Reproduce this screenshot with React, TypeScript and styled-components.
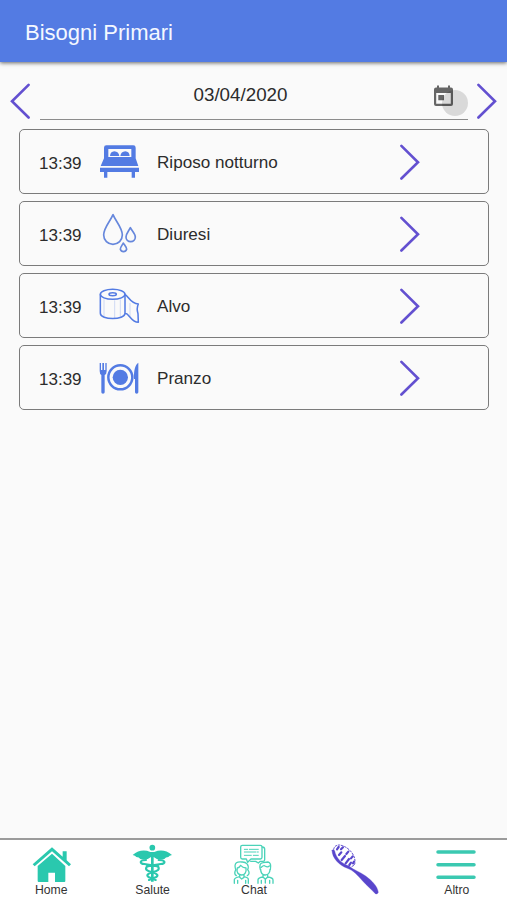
import React from "react";
import styled, { createGlobalStyle } from "styled-components";

const BLUE = "#537be3";
const VIOLET = "#6350d0";
const TEAL = "#2ac8ae";

const GlobalStyle = createGlobalStyle`
  * { box-sizing: border-box; }
  body { margin: 0; background: #fafafa; font-family: "Liberation Sans", Arial, sans-serif; }
`;

const Screen = styled.div`
  display: flex;
  flex-direction: column;
  height: 100vh;
  background: #fafafa;
  color: #2c2c2c;
`;

const Header = styled.header`
  flex: none;
  height: 62px;
  padding: 4px 25px 0;
  display: flex;
  align-items: center;
  background: ${BLUE};
  box-shadow: 0 1px 4px rgba(0, 0, 0, 0.6);
`;

const Title = styled.h1`
  margin: 0;
  color: #f4f8ff;
  font-size: 22px;
  font-weight: 400;
`;

const DateBar = styled.div`
  flex: none;
  display: flex;
  height: 57px;
  margin-top: 1px;
  padding: 0 8px;
`;

const ArrowButton = styled.button`
  flex: none;
  width: 24px;
  height: 36px;
  margin-top: 20px;
  padding: 0;
  border: 0;
  background: none;
`;

const DateField = styled.div`
  flex: 1;
  display: grid;
  grid-template-columns: 1fr auto 1fr;
  align-items: center;
  margin: 0 7px 0 8px;
  padding-top: 8px;
  border-bottom: 1px solid #8c8c8c;
`;

const DateText = styled.span`
  grid-column: 2;
  margin-left: -27px;
  font-size: 18.8px;
`;

const CalendarButton = styled.span`
  justify-self: end;
  position: relative;
  width: 22px;
  height: 24px;
  margin: 4px 13px 0 0;
`;

const Ripple = styled.span`
  position: absolute;
  left: 9px;
  top: 5px;
  width: 26px;
  height: 26px;
  border-radius: 50%;
  background: rgba(0, 0, 0, 0.13);
`;

const List = styled.main`
  flex: 1;
  display: flex;
  flex-direction: column;
  gap: 7px;
  padding: 9px 18px 0 19px;
`;

const Row = styled.div`
  display: grid;
  grid-template-columns: 59px 59px 1fr 24px 66px;
  align-items: center;
  height: 65px;
  padding-left: 19px;
  border: 1.5px solid #7b7b7b;
  border-radius: 5px;
`;

const Time = styled.span`
  padding-top: 4px;
  font-size: 17px;
`;

const Label = styled.span`
  padding-top: 2px;
  font-size: 17.1px;
`;

const Icon = styled.svg<{ $tone: string }>`
  display: block;
  width: 42px;
  height: 42px;
  overflow: visible;
  color: ${(p) => p.$tone};
`;

const ChevronSvg = styled.svg<{ $left?: boolean }>`
  display: block;
  width: 24px;
  height: 36px;
  transform: ${(p) => (p.$left ? "scaleX(-1)" : "none")};
`;

const CalendarSvg = styled.svg`
  display: block;
  width: 22px;
  height: 24px;
`;

const Nav = styled.nav`
  flex: none;
  display: grid;
  grid-template-columns: repeat(5, 1fr);
  height: 62px;
  border-top: 2px solid #9b9b9b;
  background: #fff;
`;

const NavItem = styled.div`
  display: flex;
  flex-direction: column;
  align-items: center;
  padding-top: 4px;
`;

const NavLabel = styled.span`
  margin-top: -3px;
  padding-left: 1px;
  font-size: 12.2px;
  line-height: 14px;
  color: #333;
`;

function Chevron({ left }: { left?: boolean }) {
  return (
    <ChevronSvg $left={left} viewBox="0 0 24 36" fill="none">
      <path d="M3.4 1.8 20 18.3 3.4 34.5" stroke={VIOLET} strokeWidth="2.6" strokeLinecap="round" />
    </ChevronSvg>
  );
}

const Bed = () => (
  <Icon $tone={BLUE} viewBox="24 33 126 126" fill="currentColor">
    <path
      fillRule="evenodd"
      d="M49 46H130Q137 46 137 53V85L145 108H32L42 85V53Q42 46 49 46ZM55 57V81H124V57Z"
    />
    <path d="M60 78Q61 65 73 64Q86 65 88 78ZM91 78Q93 65 106 64Q118 65 119 78Z" />
    <path d="M30 113H147V126H135V143H125V126H52V143H42V126H30Z" />
  </Icon>
);

const Drops = () => (
  <Icon $tone="#6687dc" viewBox="24 24 126 126" fill="none" stroke="currentColor" strokeWidth="5" strokeLinejoin="round">
    <path d="M69 29C62 47 41 68 41 90A28 28 0 0 0 97 90C97 68 76 47 69 29Z" />
    <path d="M121 68C117 77 108 86 108 96A14 14 0 0 0 136 96C136 86 125 77 121 68Z" />
    <path d="M100 114C97 120 91 126 91 133A10 10 0 0 0 110 133C110 126 103 120 100 114Z" />
  </Icon>
);

const Paper = () => (
  <Icon $tone={BLUE} viewBox="24 21 126 126" fill="none" stroke="currentColor" strokeWidth="4.6" strokeLinejoin="round">
    <ellipse cx="68" cy="49" rx="37" ry="15" />
    <ellipse cx="68" cy="49" rx="11" ry="4.5" />
    <path d="M31 49V106C31 127 105 127 105 106V49C115 55 122 77 145 78Q139 91 144 107L145 133C123 132 119 108 105 105" />
    <path d="M42 64V116M74 67V121M91 64V117M120 75V116" strokeWidth="1.5" opacity=".5" />
  </Icon>
);

const Meal = () => (
  <Icon $tone={BLUE} viewBox="24 21 126 126" fill="currentColor">
    <circle cx="91" cy="82" r="36" fill="none" stroke="currentColor" strokeWidth="7.5" />
    <circle cx="91" cy="82" r="23" />
    <path d="M29 39H33V60H37V39H42V60H46V39H50V63Q50 72 44 75V127Q44 131 39 131Q34 131 34 127V75Q29 72 29 63Z" />
    <path d="M145 38V127Q145 131 140 131Q135 131 135 127V87H132C131 64 135 44 145 38Z" />
  </Icon>
);

const Home = () => (
  <Icon $tone={TEAL} viewBox="89 42 126 126" fill="currentColor">
    <path d="M97 103 155 52 187 80V64H199V91L212 103L206 109L155 64L103 109Z" />
    <path d="M112 108 155 71 195 108V153Q195 156 192 156H164V128H144V156H115Q112 156 112 153Z" />
  </Icon>
);

const Caduceus = () => (
  <Icon $tone={TEAL} viewBox="64 42 126 126" fill="currentColor">
    <circle cx="128" cy="53" r="8.5" />
    <path d="M122 66Q94 54 69 75Q77 76 80 81Q88 81 92 87Q111 92 124 81V155H132V81Q145 92 164 87Q168 81 176 81Q179 76 187 75Q162 54 134 66Z" />
    <path
      d="M109 90C90 90 88 101 104 102L145 109C151 119 145 122 128 127C111 132 110 137 118 142L138 150M147 90C168 90 170 101 153 102L112 109C105 119 111 122 128 127C145 132 147 137 138 142L118 150"
      fill="none" stroke="currentColor" strokeWidth="6.5" strokeLinecap="round"
    />
  </Icon>
);

const ChatPeople = () => (
  <Icon $tone="#4bd3b9" viewBox="52 42 126 126" fill="none" stroke="currentColor" strokeWidth="4" strokeLinejoin="round" strokeLinecap="round">
    <path d="M83 46H137Q142 46 142 51V82Q142 87 137 87H109L99 97L95 87H83Q78 87 78 82V51Q78 46 83 46Z" />
    <path d="M143 51Q150 52 150 57V89Q150 94 145 94H137L131 99L123 94H108" />
    <path d="M89 58H99M104 58H131M89 66H124M89 76H110M116 76H131M128 66H131" strokeWidth="3" />
    <path d="M65 137Q57 132 63 119C56 96 70 95 81 96C94 95 105 104 99 119Q108 130 98 137M68 114C64 128 72 135 81 135S96 127 94 114Q84 113 78 106Q75 113 68 114ZM75 134V142L81 147L88 142V134M59 160V149Q60 143 75 140M88 140Q102 143 101 149V160M69 151V160M93 151V160" />
    <path d="M137 119Q132 99 145 98L160 96Q171 98 167 119M140 112Q147 105 151 108Q159 113 164 108M138 118C138 130 144 135 152 135S166 128 166 118M145 133V141L152 148L159 141V133M130 160V149Q131 143 145 141M159 141Q175 143 175 150V160M140 151V160M165 151V160M152 149V159" />
  </Icon>
);

const Brush = () => (
  <Icon $tone="#5946cc" viewBox="57 42 126 126" fill="none" stroke="currentColor" strokeLinecap="round">
    <path d="M51 61C51 84 72 106 97 115C116 121 127 136 143 153C156 167 171 180 181 191Q187 195 190 187C187 167 170 152 152 138C134 125 117 121 102 108C81 101 63 85 59 62Q54 57 51 61Z" fill="currentColor" strokeWidth="1" />
    <path d="M56 58Q58 46 72 45C92 46 119 67 120 94Q121 109 106 110" strokeWidth="3" strokeDasharray="5 5" />
    <path
      d="M66 58L71 51M78 58L84 52M72 75L79 67M94 72L100 65M80 90L90 78M92 100L102 87M108 85L113 79M103 105L108 98M114 100L117 95"
      strokeWidth="6.5"
    />
  </Icon>
);

const Menu = () => (
  <Icon $tone="#3bc9b1" viewBox="76 42 126 126" stroke="currentColor" strokeLinecap="round">
    <path d="M85 66H193M85 104H193M85 142H193" strokeWidth="10.5" />
  </Icon>
);

const Calendar = () => (
  <CalendarSvg viewBox="0 0 22 24">
    <path
      fillRule="evenodd"
      fill="#666"
      d="M4 .5H6V2.5H15V.5H17V2.5H18Q20 2.5 20 4.5V19Q20 21 18 21H3Q1 21 1 19V4.5Q1 2.5 3 2.5H4ZM3.2 8V18.8H17.8V8ZM5.3 10H11V15.2H5.3Z"
    />
  </CalendarSvg>
);

const entries = [
  { time: "13:39", label: "Riposo notturno", icon: <Bed /> },
  { time: "13:39", label: "Diuresi", icon: <Drops /> },
  { time: "13:39", label: "Alvo", icon: <Paper /> },
  { time: "13:39", label: "Pranzo", icon: <Meal /> },
];

const tabs = [
  { label: "Home", icon: <Home /> },
  { label: "Salute", icon: <Caduceus /> },
  { label: "Chat", icon: <ChatPeople /> },
  { label: "", icon: <Brush /> },
  { label: "Altro", icon: <Menu /> },
];

export default function App() {
  return (
    <Screen>
      <GlobalStyle />
      <Header>
        <Title>Bisogni Primari</Title>
      </Header>
      <DateBar>
        <ArrowButton>
          <Chevron left />
        </ArrowButton>
        <DateField>
          <DateText>03/04/2020</DateText>
          <CalendarButton>
            <Calendar />
            <Ripple />
          </CalendarButton>
        </DateField>
        <ArrowButton>
          <Chevron />
        </ArrowButton>
      </DateBar>
      <List>
        {entries.map((e) => (
          <Row key={e.label}>
            <Time>{e.time}</Time>
            {e.icon}
            <Label>{e.label}</Label>
            <Chevron />
          </Row>
        ))}
      </List>
      <Nav>
        {tabs.map((t, i) => (
          <NavItem key={i}>
            {t.icon}
            {t.label && <NavLabel>{t.label}</NavLabel>}
          </NavItem>
        ))}
      </Nav>
    </Screen>
  );
}
